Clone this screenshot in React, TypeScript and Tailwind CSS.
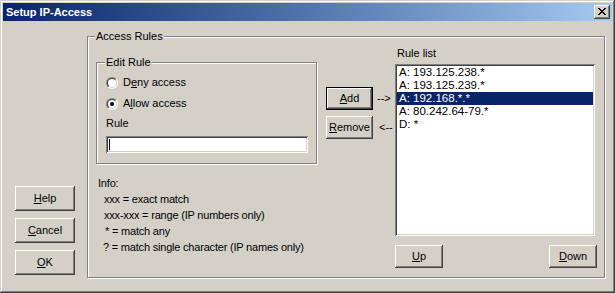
import React from "react";

const FONT = { fontFamily: '"Liberation Sans", Arial, sans-serif' };

const RULES = ["A: 193.125.238.*", "A: 193.125.239.*", "A: 192.168.*.*", "A: 80.242.64-79.*", "D: *"];

const raised =
    "shadow-[inset_-1px_-1px_0_#404040,inset_1px_1px_0_#ffffff,inset_-2px_-2px_0_#808080,inset_2px_2px_0_#d4d0c8]";
const sunken =
    "shadow-[inset_1px_1px_0_#808080,inset_-1px_-1px_0_#ffffff,inset_2px_2px_0_#404040,inset_-2px_-2px_0_#d4d0c8]";

function Button({ children, className = "", isDefault = false }: { children: React.ReactNode; className?: string; isDefault?: boolean }) {
    if (isDefault) {
        return (
            <div className={`border border-black ${className}`}>
                <div className={`w-full h-full bg-[#d4d0c8] flex items-center justify-center text-[11px] text-black ${raised}`}>
                    {children}
                </div>
            </div>
        );
    }
    return (
        <div className={`bg-[#d4d0c8] flex items-center justify-center text-[11px] text-black ${raised} ${className}`}>
            {children}
        </div>
    );
}

function Group({ label, labelLeft, className = "", children }: { label: string; labelLeft: string; className?: string; children?: React.ReactNode }) {
    return (
        <div className={`relative border border-[#808080] shadow-[inset_1px_1px_0_#ffffff,1px_1px_0_#ffffff] ${className}`}>
            <span className={`absolute top-[-7px] ${labelLeft} px-[1px] bg-[#d4d0c8] leading-[13px] text-[11px] text-black`}>{label}</span>
            {children}
        </div>
    );
}

function Radio({ checked, children }: { checked?: boolean; children: React.ReactNode }) {
    return (
        <div className="flex items-center h-[13px]">
            <div className="w-[12px] h-[12px] rounded-full p-[1px] bg-gradient-to-br from-[#808080] from-50% to-white to-50%">
                <div className="w-full h-full rounded-full bg-gradient-to-br from-[#404040] from-50% to-[#d4d0c8] to-50% p-[1px]">
                    <div className="w-full h-full rounded-full bg-white flex items-center justify-center">
                        {checked && <div className="w-[4px] h-[4px] rounded-full bg-black" />}
                    </div>
                </div>
            </div>
            <span className="ml-[5px] text-[11px] leading-[13px] text-black">{children}</span>
        </div>
    );
}

export default function App() {
    return (
        <div
            style={FONT}
            className="w-[615px] h-[293px] p-[3px] bg-[#d4d0c8] shadow-[inset_-1px_-1px_0_#404040,inset_1px_1px_0_#d4d0c8,inset_-2px_-2px_0_#808080,inset_2px_2px_0_#ffffff]"
        >
            {/* ─── Title bar ─── */}
            <div className="h-[18px] flex items-center bg-gradient-to-r from-[#0a246a] to-[#a6caf0] pl-[3px] pr-[2px]">
                <span className="text-white font-bold text-[11px] leading-[13px] flex-1">Setup IP-Access</span>
                <div className={`w-[16px] h-[14px] bg-[#d4d0c8] flex items-center justify-center ${raised}`}>
                    <svg width="8" height="7" viewBox="0 0 8 7" shapeRendering="crispEdges" className="-mt-[1px]">
                        <path d="M0 0h2v1H0zM6 0h2v1H6zM1 1h2v1H1zM5 1h2v1H5zM2 2h4v1H2zM3 3h2v1H3zM2 4h4v1H2zM1 5h2v1H1zM5 5h2v1H5zM0 6h2v1H0zM6 6h2v1H6z" fill="#000" />
                    </svg>
                </div>
            </div>

            {/* ─── Body ─── */}
            <div className="flex">
                <div className="w-[84px] pl-[12px] pt-[165px] flex flex-col gap-[7px]">
                    <Button className="w-[60px] h-[25px]"><span><u>H</u>elp</span></Button>
                    <Button className="w-[60px] h-[25px]"><span><u>C</u>ancel</span></Button>
                    <Button className="w-[60px] h-[25px]"><span><u>O</u>K</span></Button>
                </div>

                <Group label="Access Rules" labelLeft="left-[7px]" className="mt-[15px] w-[518px] h-[242px] flex">
                    {/* left part */}
                    <div className="w-[229px] pl-[8px] pt-[25px]">
                        <Group label="Edit Rule" labelLeft="left-[8px]" className="w-[221px] h-[102px] pl-[9px] pt-[13px]">
                            <Radio><span>D<u>e</u>ny access</span></Radio>
                            <div className="mt-[8px]">
                                <Radio checked><span>A<u>l</u>low access</span></Radio>
                            </div>
                            <div className="mt-[7px] text-[11px] leading-[13px] text-black">Rule</div>
                            <div className={`mt-[6px] w-[202px] h-[17px] bg-white flex items-center pl-[3px] ${sunken}`}>
                                <div className="w-[1px] h-[11px] bg-black" />
                            </div>
                        </Group>
                        <div className="mt-[11px] pl-[2px] text-[11px] leading-[16px] tracking-[-0.2px] text-black whitespace-pre">
                            <div>Info:</div>
                            <div className="pl-[6px]">xxx = exact match</div>
                            <div className="pl-[6px]">xxx-xxx = range (IP numbers only)</div>
                            <div className="pl-[7px]">* = match any</div>
                            <div className="pl-[5px]">? = match single character (IP names only)</div>
                        </div>
                    </div>

                    {/* middle: add / remove */}
                    <div className="w-[78px] pl-[9px] pt-[50px] flex flex-col gap-[6px]">
                        <div className="flex items-center">
                            <Button isDefault className="w-[47px] h-[23px]"><span><u>A</u>dd</span></Button>
                            <span className="ml-[4px] text-[11px] text-black">--&gt;</span>
                        </div>
                        <div className="flex items-center">
                            <Button className="w-[47px] h-[23px]"><span><u>R</u>emove</span></Button>
                            <span className="ml-[6px] text-[11px] text-black">&lt;--</span>
                        </div>
                    </div>

                    {/* right: rule list */}
                    <div className="pt-[10px]">
                        <div className="pl-[2px] h-[13px] text-[11px] leading-[13px] text-black">Rule list</div>
                        <div className={`mt-[4px] w-[200px] h-[172px] bg-white p-[2px] ${sunken}`}>
                            {RULES.map((r, i) => (
                                <div
                                    key={r}
                                    className={`h-[13px] leading-[13px] px-[2px] text-[11.5px] ${i === 2 ? "bg-[#0a246a] text-white" : "text-black"}`}
                                >
                                    {r}
                                </div>
                            ))}
                        </div>
                        <div className="mt-[9px] w-[202px] flex justify-between">
                            <Button className="w-[48px] h-[23px]"><span><u>U</u>p</span></Button>
                            <Button className="w-[48px] h-[23px]"><span><u>D</u>own</span></Button>
                        </div>
                    </div>
                </Group>
            </div>
        </div>
    );
}
